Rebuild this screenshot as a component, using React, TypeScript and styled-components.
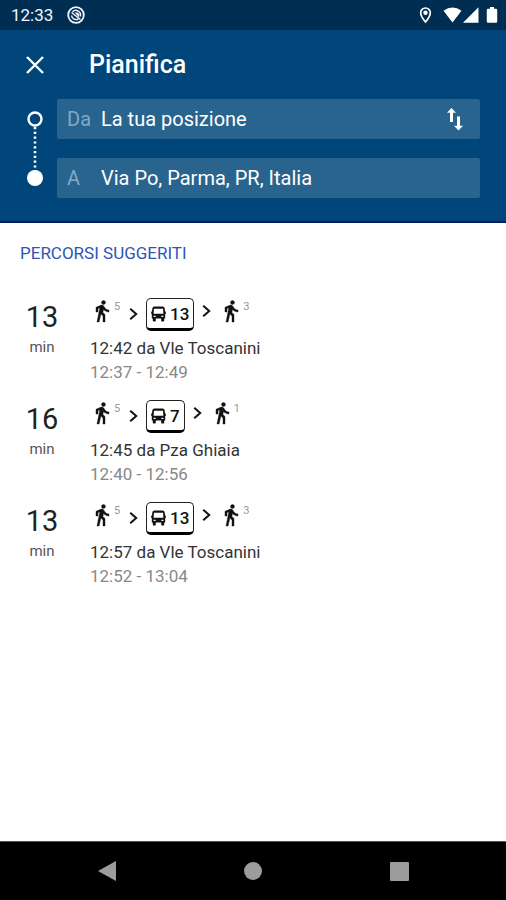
import React from "react";
import styled, { createGlobalStyle } from "styled-components";

const GlobalStyle = createGlobalStyle`
  * { box-sizing: border-box; }
  html, body { margin: 0; }
  body { background: #fff; font-family: Roboto, "Liberation Sans", sans-serif; color: #222; }
  button, input { font: inherit; color: inherit; }
  svg { display: block; flex: none; }
`;

const Screen = styled.div`
  display: flex;
  flex-direction: column;
  min-height: 100vh;
`;

const StatusBar = styled.div`
  display: flex;
  align-items: center;
  height: 30px;
  padding: 0 7px 0 11px;
  background: #002e52;
  color: #f4f6fb;
  font-size: 17px;
`;

const StatusApp = styled.div`
  margin-left: 14px;
`;

const StatusIcons = styled.div`
  display: flex;
  align-items: center;
  margin-left: auto;
`;

const Header = styled.header`
  padding: 0 26px 23px 20px;
  background: #00467a;
  border-bottom: 2px solid #001c66;
  color: #fff;
`;

const TitleBar = styled.div`
  display: flex;
  align-items: center;
  gap: 39px;
  height: 69px;
`;

const Title = styled.h1`
  margin: 0;
  font-size: 25px;
  line-height: 32px;
  font-weight: 500;
`;

const IconButton = styled.button`
  display: flex;
  align-items: center;
  justify-content: center;
  width: 30px;
  height: 30px;
  padding: 0;
  border: 0;
  background: none;
  cursor: pointer;
`;

const Planner = styled.div`
  display: flex;
  gap: 7px;
`;

const Fields = styled.div`
  flex: 1;
  min-width: 0;
  display: grid;
  gap: 19px;
`;

const Field = styled.div`
  display: flex;
  align-items: center;
  height: 40px;
  padding: 0 10px;
  border-radius: 2px;
  background: #29648f;
`;

const FieldLabel = styled.label`
  flex: none;
  width: 34px;
  font-size: 20px;
  color: #7fa9c6;
`;

const FieldInput = styled.input`
  flex: 1;
  min-width: 0;
  padding: 0;
  border: 0;
  outline: 0;
  background: none;
  font-size: 20px;
`;

const Main = styled.main`
  flex: 1;
  padding: 18px 20px;
`;

const SectionTitle = styled.h2`
  margin: 0 0 32px;
  font-size: 17px;
  line-height: 24px;
  font-weight: 400;
  color: #2d54b8;
`;

const RouteList = styled.ul`
  display: grid;
  margin: 0;
  padding: 0;
  list-style: none;
`;

const RouteRow = styled.button`
  display: flex;
  gap: 26px;
  width: 100%;
  height: 102px;
  padding: 0;
  border: 0;
  background: none;
  text-align: left;
  cursor: pointer;
`;

const Duration = styled.span`
  display: flex;
  flex-direction: column;
  align-items: center;
  width: 44px;
  padding-top: 2px;
`;

const Minutes = styled.span`
  font-size: 29px;
  line-height: 36px;
`;

const Unit = styled.span`
  font-size: 15px;
  line-height: 24px;
  color: #555;
`;

const Details = styled.span`
  display: flex;
  flex-direction: column;
`;

const Legs = styled.span`
  display: flex;
  align-items: flex-start;
  height: 39px;
`;

const Walk = styled.span`
  display: flex;
  align-items: flex-start;
  padding-top: 2px;
  width: 39px;
`;

const WalkMinutes = styled.span`
  font-size: 11px;
  line-height: 16px;
  color: #999;
`;

const Arrow = styled.span<{ $low?: boolean }>`
  padding-top: ${(p) => (p.$low ? 11 : 8)}px;
  margin-right: 8px;
`;

const LineBadge = styled.span`
  display: flex;
  align-items: center;
  gap: 4px;
  height: 33px;
  margin: 1px 8px 0 0;
  padding: 0 4px;
  border: 1px solid #222;
  border-bottom: 3px solid #000;
  border-radius: 5px;
  font-size: 17px;
  font-weight: 500;
  color: #111;
`;

const Departure = styled.span`
  font-size: 17px;
  line-height: 24px;
  color: #333;
`;

const Interval = styled.span`
  font-size: 17px;
  line-height: 24px;
  color: #888;
`;

const NavBar = styled.nav`
  display: flex;
  align-items: center;
  justify-content: space-around;
  height: 59px;
  padding: 0 34px;
  border-top: 1px solid #555;
  background: #000;
  color: #9c9c9c;
`;

const RouteTrack = () => (
  <svg width="30" height="99" viewBox="0 0 30 99" fill="none" stroke="#fff" aria-hidden="true">
    <circle cx="15" cy="20" r="6.5" strokeWidth="2.4" />
    <path d="M15 28v44" strokeWidth="2.600" strokeDasharray="2.2 2.6" />
    <circle cx="15" cy="79" r="8" fill="#fff" stroke="none" />
  </svg>
);

const WalkIcon = () => (
  <svg width="24" height="24" viewBox="0 0 24 24" fill="#111" stroke="#111" strokeWidth="0.4" aria-hidden="true">
    <path d="M13.5 5.5c1.1 0 2-.9 2-2s-.9-2-2-2-2 .9-2 2 .9 2 2 2zM9.8 8.9 7 23h2.1l1.8-8 2.1 2v6h2v-7.5l-2.1-2 .6-3C14.8 12 16.8 13 19 13v-2c-1.9 0-3.5-1-4.3-2.4l-1-1.6c-.4-.6-1-1-1.7-1-.3 0-.5.1-.8.1L6 8.3V13h2V9.600z" />
  </svg>
);

const ChevronIcon = () => (
  <svg width="9" height="12" viewBox="0 0 9 12" fill="none" stroke="#111" strokeWidth="2" aria-hidden="true">
    <path d="m1.200 0.800 6 5.200-6 5.200" />
  </svg>
);

const BusIcon = () => (
  <svg width="15" height="16" viewBox="0 0 15 16" fill="#111" aria-hidden="true">
    <path
      fillRule="evenodd"
      d="M3.500.5h8q2 0 2.200 2l.3 3h.8v2.500H14.200v4.500h-1v2.200q0 .8-.8.8H11q-.8 0-.8-.8v-2.200H4.800v2.200q0 .8-.8.8H2.600q-.8 0-.8-.8v-2.200h-1V8H.2V5.500H1l.3-3q.2-2 2.200-2zM3 2.800 2.600 7.700h9.800L12 2.800zM2.600 9.700v1.300h2V9.700zM10.400 9.700v1.300h2V9.700z"
    />
  </svg>
);

type Route = {
  minutes: number;
  walkStart: number;
  line: string;
  walkEnd: number;
  departure: string;
  interval: string;
};

const routes: Route[] = [
  { minutes: 13, walkStart: 5, line: "13", walkEnd: 3, departure: "12:42 da Vle Toscanini", interval: "12:37 - 12:49" },
  { minutes: 16, walkStart: 5, line: "7", walkEnd: 1, departure: "12:45 da Pza Ghiaia", interval: "12:40 - 12:56" },
  { minutes: 13, walkStart: 5, line: "13", walkEnd: 3, departure: "12:57 da Vle Toscanini", interval: "12:52 - 13:04" },
];

const WalkLeg = ({ minutes }: { minutes: number }) => (
  <Walk>
    <WalkIcon />
    <WalkMinutes>{minutes}</WalkMinutes>
  </Walk>
);

const RouteItem = ({ route }: { route: Route }) => (
  <li>
    <RouteRow type="button">
      <Duration>
        <Minutes>{route.minutes}</Minutes>
        <Unit>min</Unit>
      </Duration>
      <Details>
        <Legs>
          <WalkLeg minutes={route.walkStart} />
          <Arrow $low>
            <ChevronIcon />
          </Arrow>
          <LineBadge>
            <BusIcon />
            {route.line}
          </LineBadge>
          <Arrow>
            <ChevronIcon />
          </Arrow>
          <WalkLeg minutes={route.walkEnd} />
        </Legs>
        <Departure>{route.departure}</Departure>
        <Interval>{route.interval}</Interval>
      </Details>
    </RouteRow>
  </li>
);

export default function App() {
  return (
    <Screen>
      <GlobalStyle />
      <StatusBar>
        <span>12:33</span>
        <StatusApp>
          <svg width="18" height="18" viewBox="0 0 18 18" fill="none" stroke="#f4f6fb" aria-hidden="true">
            <circle cx="9" cy="9" r="7.800" strokeWidth="1.800" />
            <path d="M5.500 6a4.600 4.600 0 0 1 7.800 4.500M11.500 12.800A4.600 4.600 0 0 1 4.500 9.500" strokeWidth="1.500" />
            <path d="m4.500 6.500 9 7" strokeWidth="1.500" />
            <path d="M7.500 6.500h3l2 2-.5 2.800z" fill="#f4f6fb" stroke="none" />
          </svg>
        </StatusApp>
        <StatusIcons>
          <svg width="81" height="18" viewBox="0 0 81 18" fill="#fff" aria-hidden="true">
            <path d="M7.500 2a4.800 4.800 0 0 0-4.800 4.800C2.700 10.500 7.500 16 7.500 16s4.800-5.500 4.800-9.200A4.800 4.800 0 0 0 7.500 2z" fill="none" stroke="#fff" strokeWidth="1.700" />
            <circle cx="7.500" cy="6.800" r="2.200" />
            <path d="M25.500 4.800Q34.500-1.600 43.500 4.800L34.500 16.500z" />
            <path d="M60.500 1.200v15.500H45z" />
            <path d="M72 1h4v1.800h2q1.200 0 1.200 1.200v11.500q0 1.200-1.200 1.200h-8q-1.200 0-1.200-1.200V4q0-1.200 1.200-1.200h2z" />
          </svg>
        </StatusIcons>
      </StatusBar>

      <Header>
        <TitleBar>
          <IconButton type="button" aria-label="Chiudi">
            <svg width="18" height="18" viewBox="0 0 18 18" fill="none" stroke="#fff" strokeWidth="2.400" aria-hidden="true">
              <path d="m1 1 16 16M17 1 1 17" />
            </svg>
          </IconButton>
          <Title>Pianifica</Title>
        </TitleBar>
        <Planner>
          <RouteTrack />
          <Fields>
            <Field>
              <FieldLabel htmlFor="from">Da</FieldLabel>
              <FieldInput id="from" type="text" defaultValue="La tua posizione" />
              <IconButton type="button" aria-label="Inverti">
                <svg width="18" height="24" viewBox="0 0 18 24" fill="#fff" aria-hidden="true">
                  <path d="M5.500 1 10 5.800H7v9.200H4V5.800H1zM12.500 23.500 8 18.700h3V9.500h3v9.200h3z" />
                </svg>
              </IconButton>
            </Field>
            <Field>
              <FieldLabel htmlFor="to">A</FieldLabel>
              <FieldInput id="to" type="text" defaultValue="Via Po, Parma, PR, Italia" />
            </Field>
          </Fields>
        </Planner>
      </Header>

      <Main>
        <SectionTitle>PERCORSI SUGGERITI</SectionTitle>
        <RouteList>
          {routes.map((route) => (
            <RouteItem key={route.departure} route={route} />
          ))}
        </RouteList>
      </Main>

      <NavBar>
        <IconButton type="button" aria-label="Indietro">
          <svg width="20" height="22" viewBox="0 0 20 22" fill="currentColor" aria-hidden="true">
            <path d="M19 1v20L1 11z" />
          </svg>
        </IconButton>
        <IconButton type="button" aria-label="Home">
          <svg width="18" height="18" viewBox="0 0 18 18" fill="currentColor" aria-hidden="true">
            <circle cx="9" cy="9" r="9" />
          </svg>
        </IconButton>
        <IconButton type="button" aria-label="Recenti">
          <svg width="19" height="19" viewBox="0 0 19 19" fill="currentColor" aria-hidden="true">
            <rect width="19" height="19" rx="1" />
          </svg>
        </IconButton>
      </NavBar>
    </Screen>
  );
}
